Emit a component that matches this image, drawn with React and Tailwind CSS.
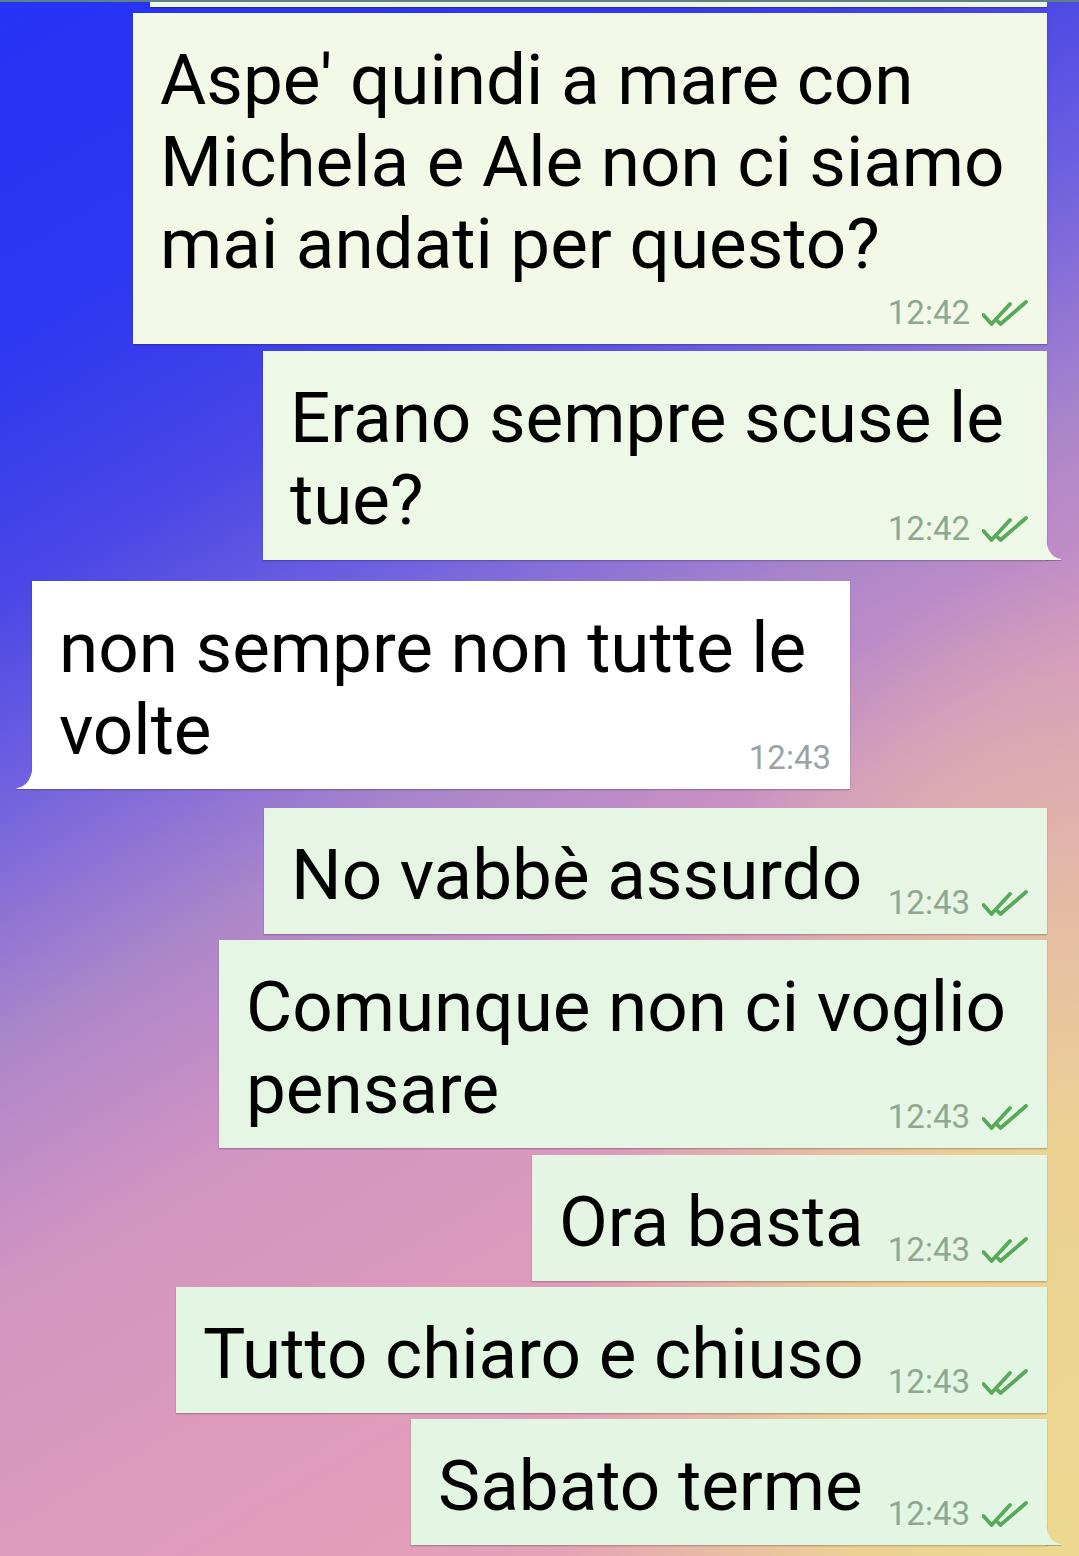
import React from "react";

const Ticks = () => (
  <svg width="46" height="26" viewBox="0 0 46 26" fill="none" className="shrink-0">
    <path d="M1.5 15 L9.5 24 L28 4" stroke="#58aa5a" strokeWidth="3.8" strokeLinecap="round" strokeLinejoin="round" />
    <path d="M15.5 21 L18.5 24 L44 2" stroke="#58aa5a" strokeWidth="3.8" strokeLinecap="round" strokeLinejoin="round" />
  </svg>
);

const TailRight = ({ color }) => (
  <svg width="16" height="26" viewBox="0 0 16 26" className="absolute -right-[15px] bottom-0 drop-shadow-[0_1px_0.5px_rgba(0,0,0,0.25)]">
    <path d="M0 0 C0 15 5 24 15 25 Q16 26 14 26 L0 26 Z" fill={color} />
  </svg>
);

const TailLeft = ({ color }) => (
  <svg width="17" height="28" viewBox="0 0 17 28" className="absolute -left-[16px] bottom-0 drop-shadow-[0_1px_0.5px_rgba(0,0,0,0.25)]">
    <path d="M17 0 C17 16 11 26 1 27 Q0 28 2 28 L17 28 Z" fill={color} />
  </svg>
);

const messages = [
  {
    lines: ["Aspe' quindi a mare con", "Michela e Ale non ci siamo", "mai andati per questo?"],
    time: "12:42",
    sent: true,
    box: "mt-[6px] w-[914px] bg-[#f2f9e6]",
    color: "#f2f9e6",
    timeRow: "mt-[11px]",
  },
  {
    lines: ["Erano sempre scuse le", "tue?"],
    time: "12:42",
    sent: true,
    box: "mt-[7px] w-[784px] bg-[#eef8e6]",
    color: "#eef8e6",
    tail: true,
    timeRow: "-mt-[29px]",
  },
  {
    lines: ["non sempre non tutte le", "volte"],
    time: "12:43",
    sent: false,
    box: "mt-[21px] w-[818px] bg-white",
    color: "#ffffff",
    tail: true,
    timeRow: "-mt-[30px]",
  },
  {
    lines: ["No vabbè assurdo"],
    time: "12:43",
    sent: true,
    box: "mt-[19px] w-[783px] bg-[#e7f6e4]",
    color: "#e7f6e4",
    timeRow: "-mt-[30px]",
  },
  {
    lines: ["Comunque non ci voglio", "pensare"],
    time: "12:43",
    sent: true,
    box: "mt-[6px] w-[828px] bg-[#e6f6e4]",
    color: "#e6f6e4",
    timeRow: "-mt-[30px]",
  },
  {
    lines: ["Ora basta"],
    time: "12:43",
    sent: true,
    box: "mt-[7px] w-[515px] bg-[#e4f6e3]",
    color: "#e4f6e3",
    timeRow: "-mt-[30px]",
  },
  {
    lines: ["Tutto chiaro e chiuso"],
    time: "12:43",
    sent: true,
    box: "mt-[6px] w-[871px] bg-[#e3f6e3]",
    color: "#e3f6e3",
    timeRow: "-mt-[30px]",
  },
  {
    lines: ["Sabato terme"],
    time: "12:43",
    sent: true,
    box: "mt-[6px] w-[636px] bg-[#e2f6e3]",
    color: "#e2f6e3",
    tail: true,
    timeRow: "-mt-[30px]",
  },
];

function Bubble({ m }) {
  return (
    <div
      className={`relative ${m.sent ? "self-end mr-[32px]" : "self-start ml-[32px]"} ${m.box} shadow-[0_1px_1.5px_rgba(0,0,0,0.28)] pt-[26px] pl-[27px] pr-[19px] pb-[14px]`}
    >
      <div className="text-[71px] leading-[82px] text-black whitespace-nowrap">
        {m.lines.map((l, i) => (
          <div key={i}>{l}</div>
        ))}
      </div>
      <div className={`relative flex items-center justify-end gap-[12px] h-[34px] ${m.timeRow}`}>
        <span className={`text-[33px] leading-[34px] ${m.sent ? "text-[#8ea78e]" : "text-[#98a4a4]"}`}>{m.time}</span>
        {m.sent && <Ticks />}
      </div>
      {m.tail && (m.sent ? <TailRight color={m.color} /> : <TailLeft color={m.color} />)}
    </div>
  );
}

export default function App() {
  return (
    <div className="relative h-[1556px] w-full overflow-hidden font-['Roboto',sans-serif] bg-[radial-gradient(520px_1000px_at_100%_100%,#ecd890_0%,rgba(236,214,146,0.92)_42%,rgba(236,214,146,0)_100%),linear-gradient(150deg,#2632f5_0%,#2e38f0_16%,#4846e6_27%,#6e60e0_36%,#ac86ca_48%,#d294c2_59%,#dc9abc_71%,#e4a0b8_84%,#e8a8b0_100%)]">
      <div className="h-[2px] bg-[#5d8187]" />
      <div className="ml-[150px] mr-[32px] h-[5px] bg-[#eef6e6] shadow-[0_1px_1.5px_rgba(0,0,0,0.28)]" />
      <div className="flex flex-col">
        {messages.map((m, i) => (
          <Bubble key={i} m={m} />
        ))}
      </div>
    </div>
  );
}
